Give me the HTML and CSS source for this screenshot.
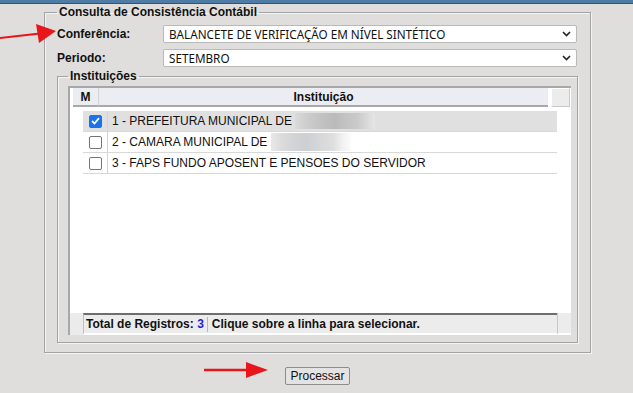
FILE: index.html
```html
<!DOCTYPE html>
<html lang="pt">
<head>
    <meta charset="UTF-8">
    <title>Consulta de Consistência Contábil</title>
    <link rel="stylesheet" href="styles.css">
</head>
<body>

    <div class="top-bar"></div>

    <fieldset class="box main-box">
        <legend>Consulta de Consistência Contábil</legend>

        <div class="field-row">
            <label>Conferência:</label>
            <div class="select">
                <span>BALANCETE DE VERIFICAÇÃO EM NÍVEL SINTÉTICO</span>
                <svg width="9" height="6" viewBox="0 0 9 6"><path d="M1 1 L4.5 4.5 L8 1" fill="none" stroke="#222" stroke-width="1.6"/></svg>
            </div>
        </div>

        <div class="field-row">
            <label>Periodo:</label>
            <div class="select">
                <span>SETEMBRO</span>
                <svg width="9" height="6" viewBox="0 0 9 6"><path d="M1 1 L4.5 4.5 L8 1" fill="none" stroke="#222" stroke-width="1.6"/></svg>
            </div>
        </div>

        <fieldset class="box inst-box">
            <legend>Instituições</legend>

            <div class="grid">
                <div class="grid-head">
                    <div class="hcell hcell-m">M</div>
                    <div class="hcell hcell-name">Instituição</div>
                    <div class="hcorner"></div>
                </div>

                <div class="grid-body">
                    <div class="row selected">
                        <div class="cell-check"><span class="check checked">
                            <svg width="9" height="8" viewBox="0 0 9 8"><path d="M1 4 L3.5 6.5 L8 1.2" fill="none" stroke="#fff" stroke-width="1.8"/></svg>
                        </span></div>
                        <div class="cell-name">1 - PREFEITURA MUNICIPAL DE <span class="blur blur-1"></span></div>
                    </div>
                    <div class="row">
                        <div class="cell-check"><span class="check"></span></div>
                        <div class="cell-name">2 - CAMARA MUNICIPAL DE <span class="blur blur-2"></span></div>
                    </div>
                    <div class="row">
                        <div class="cell-check"><span class="check"></span></div>
                        <div class="cell-name">3 - FAPS FUNDO APOSENT E PENSOES DO SERVIDOR</div>
                    </div>
                </div>

                <div class="grid-foot">
                    <div class="foot-left"></div>
                    <div class="foot-main">
                        <span class="foot-total">Total de Registros: <b class="count">3</b></span>
                        <span class="foot-hint">Clique sobre a linha para selecionar.</span>
                    </div>
                    <div class="foot-right"></div>
                </div>
            </div>
        </fieldset>
    </fieldset>

    <div class="actions">
        <button class="btn">Processar</button>
    </div>

    <!-- setas vermelhas sobre a tela -->
    <svg class="arrow arrow-1" width="60" height="24" viewBox="0 0 60 24">
        <path d="M0 16 L40 11.5" stroke="#e8161b" stroke-width="2.2"/>
        <path d="M56 9 L36 2 L39 21 Z" fill="#e8161b"/>
    </svg>
    <svg class="arrow arrow-2" width="66" height="18" viewBox="0 0 66 18">
        <path d="M0 9 L46 9" stroke="#e8161b" stroke-width="2.4"/>
        <path d="M64 9 L42 1 L42 17 Z" fill="#e8161b"/>
    </svg>

</body>
</html>
```

FILE: styles.css
```css
body {
    margin: 0;
    padding: 0;
    background-color: #dfdedc;
    font-family: 'Liberation Sans', Arial, sans-serif;
    font-size: 12px;
    color: #111;
    height: 393px;
    position: relative;
    overflow: hidden;
}

.top-bar {
    height: 3px;
    background-color: #4f7ca4;
    border-bottom: 1px solid #34536e;
}

/* fieldsets */
.box {
    border: 1px solid #a3a3a3;
    box-shadow: inset 1px 1px 0 #f4f4f4, 1px 1px 0 #f4f4f4;
    margin: 0;
    min-width: 0;
}

.box legend {
    font-weight: bold;
    font-size: 12px;
    padding: 0 2px;
}

.main-box {
    width: 547px;
    box-sizing: border-box;
    margin-left: 44px;
    margin-top: 1px;
    padding: 6px 12px 9px 12px;
}

.field-row {
    display: flex;
    align-items: center;
    margin-bottom: 6px;
}

.field-row label {
    width: 106px;
    font-weight: bold;
}

.select {
    width: 414px;
    height: 18px;
    box-sizing: border-box;
    background-color: #fff;
    border: 1px solid #b9b9b9;
    border-radius: 2px;
    display: flex;
    align-items: center;
    justify-content: space-between;
    padding: 0 5px 0 5px;
    font-family: 'Noto Sans', sans-serif;
    font-size: 11.7px;
    color: #111;
}

.inst-box {
    margin-top: -4px;
    padding: 3px 6px 7px 10px;
}

/* grid */
.grid {
    height: 247px;
    background-color: #fff;
    border-left: 2px solid #a8a8a8;
    border-top: 2px solid #a8a8a8;
    display: flex;
    flex-direction: column;
}

.grid-head {
    display: flex;
    height: 19px;
    padding-left: 3px;
}

.hcell {
    background-color: #ebedf2;
    border-bottom: 2px solid #a8a8a8;
    font-weight: bold;
    display: flex;
    align-items: center;
    justify-content: center;
}

.hcell-m {
    width: 25px;
    border-right: 1px solid #d0d2d8;
}

.hcell-name {
    width: 449px;
}

.hcorner {
    width: 17px;
    height: 17px;
    margin-left: 3px;
    background-color: #ececec;
    border: 1px solid #c8c8c8;
    border-top-color: #fff;
    border-left-color: #fff;
}

.grid-body {
    flex: 1;
    padding-left: 13px;
    padding-top: 4px;
}

.row {
    width: 474px;
    height: 21px;
    display: flex;
    align-items: center;
    border-bottom: 1px solid #d8d8d8;
    box-sizing: border-box;
}

.row.selected {
    background-color: #e0e0e0;
}

.cell-check {
    width: 25px;
    height: 100%;
    display: flex;
    align-items: center;
    justify-content: center;
    border-right: 1px solid #d4d4d4;
    box-sizing: border-box;
}

.check {
    width: 13px;
    height: 13px;
    box-sizing: border-box;
    border: 1px solid #767676;
    border-radius: 2px;
    background-color: #fff;
    display: flex;
    align-items: center;
    justify-content: center;
}

.check.checked {
    background-color: #1a73e8;
    border-color: #1a73e8;
}

.cell-name {
    padding-left: 4px;
    display: flex;
    align-items: center;
    white-space: pre;
}

.blur {
    display: inline-block;
    height: 16px;
}

.blur-1 {
    width: 80px;
    background: linear-gradient(90deg, #dadada 0, #cdcdcd 12px, #c3c3c3 25px, #bababa 40px, #c4c4c4 52px, #c9c9c9 62px, #d6d6d6 70px, #e6e6e6 80px);
}

.blur-2 {
    width: 80px;
    height: 18px;
    background: linear-gradient(90deg, #e8e8e8 0, #dcdcdc 10px, #d2d4d6 22px, #cdd0d3 35px, #d6d8da 50px, #dedede 62px, #f2f2f2 72px, #fbfbfb 80px);
}

.grid-foot {
    display: flex;
    height: 22px;
}

.foot-left {
    width: 13px;
    background-color: #ebebeb;
}

.foot-main {
    width: 474px;
    box-sizing: border-box;
    background-color: #ececec;
    border-top: 2px solid #6e6e6e;
    border-left: 1px solid #c0c0c0;
    border-bottom: 2px solid #fff;
    display: flex;
    align-items: center;
    font-weight: bold;
}

.foot-total {
    padding: 0 3px 0 2px;
    border-right: 1px solid #b8b8b8;
    line-height: 15px;
}

.count {
    color: #1c1cdc;
}

.foot-hint {
    padding-left: 4px;
}

.foot-right {
    flex: 1;
    background-color: #ececec;
    border-left: 1px solid #c8c8c8;
    border-bottom: 2px solid #fff;
}

/* botao */
.actions {
    display: flex;
    justify-content: center;
    padding-left: 2px;
    margin-top: 14px;
}

.btn {
    font-family: 'Liberation Sans', Arial, sans-serif;
    font-size: 12px;
    color: #111;
    background-color: #e3e3e3;
    border: 1px solid #8c8c8c;
    border-radius: 2px;
    padding: 0 4px;
    height: 18px;
}

/* setas */
.arrow {
    position: absolute;
}

.arrow-1 {
    left: 0;
    top: 22px;
}

.arrow-2 {
    left: 204px;
    top: 361px;
}
```
